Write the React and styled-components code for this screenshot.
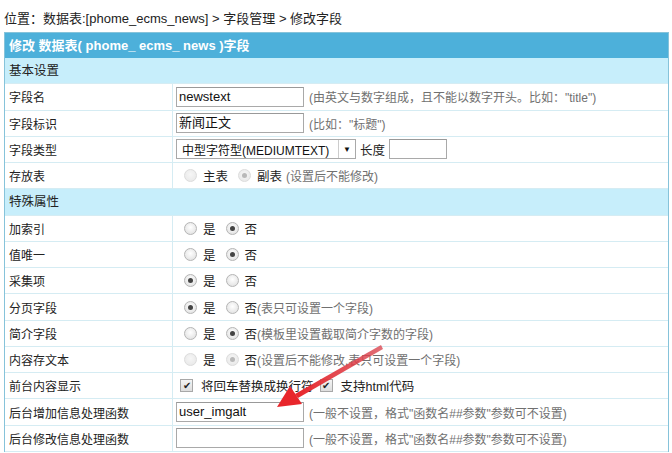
import React from "react";
import styled, { createGlobalStyle, css } from "styled-components";

const Global = createGlobalStyle`
  html, body { margin: 0; padding: 0; background: #fff; }
  body {
    font-family: "Liberation Sans", "Noto Sans CJK SC", sans-serif;
    font-size: 12px;
    color: #222;
  }
`;

const Page = styled.div`
  position: relative;
  width: 672px;
  height: 453px;
  padding: 0 3px 0 4px;
  box-sizing: border-box;
  overflow: hidden;
`;

const Crumb = styled.div`
  height: 32px;
  line-height: 38px;
  font-size: 13px;
  color: #222;
  white-space: nowrap;
`;

const Table = styled.div`
  border: 1px solid #86c3da;
  border-bottom: none;
  display: flex;
  flex-direction: column;
`;

const Title = styled.div`
  height: 25px;
  line-height: 25px;
  background: #4db0da;
  color: #fff;
  font-weight: bold;
  padding-left: 4px;
  font-size: 13px;
  white-space: nowrap;
`;

const Section = styled.div`
  height: 26.27px;
  line-height: 26px;
  box-sizing: border-box;
  background: #c7eefb;
  padding-left: 4px;
  font-size: 12.5px;
  border-bottom: 1px solid #d5ecf3;
`;

const Row = styled.div`
  height: 26.27px;
  box-sizing: border-box;
  display: grid;
  grid-template-columns: 168px 1fr;
  border-bottom: 1px solid #d5ecf3;
  background: #fff;
`;

const Label = styled.div`
  display: flex;
  align-items: center;
  padding-left: 4px;
  font-size: 12px;
  border-right: 1px solid #d5ecf3;
  white-space: nowrap;
`;

const Cell = styled.div`
  display: flex;
  align-items: center;
  padding-left: ${(p) => p.$pl ?? 3}px;
  white-space: nowrap;
  font-size: 12.5px;
`;

const TextInput = styled.div`
  box-sizing: border-box;
  width: ${(p) => p.$w}px;
  height: 20px;
  border: 1px solid #a9a9a9;
  border-top-color: #999;
  line-height: 18px;
  padding-left: 2px;
  font-size: 13px;
  color: #111;
  background: #fff;
`;

const Hint = styled.span`
  color: #707070;
  font-size: 12px;
  margin-left: ${(p) => p.$ml ?? 5}px;
`;

const Select = styled.div`
  box-sizing: border-box;
  width: 180px;
  height: 20px;
  border: 1px solid #a9a9a9;
  display: flex;
  align-items: center;
  padding-left: 5px;
  font-size: 12px;
  color: #111;
`;

const Arrow = styled.span`
  margin-left: auto;
  width: 16px;
  height: 18px;
  display: flex;
  align-items: center;
  justify-content: center;
  font-size: 8px;
  color: #111;
  border-left: 1px solid #ccc;
`;

const Radio = styled.span`
  display: inline-block;
  box-sizing: border-box;
  width: 13px;
  height: 13px;
  border-radius: 50%;
  border: 1px solid ${(p) => (p.$disabled ? "#dcdcdc" : "#b5b5b5")};
  background: ${(p) =>
    p.$disabled
      ? "radial-gradient(circle at 50% 40%, #f6f6f6, #e6e6e6)"
      : "radial-gradient(circle at 50% 40%, #ffffff, #dcdcdc)"};
  margin: 0 6px 0 ${(p) => p.$ml ?? 0}px;
  position: relative;
  ${(p) =>
    p.$on &&
    css`
      &::after {
        content: "";
        position: absolute;
        left: 3px;
        top: 3px;
        width: 5px;
        height: 5px;
        border-radius: 50%;
        background: ${p.$disabled ? "#b8b8b8" : "#444"};
      }
    `}
`;

const Check = styled.span`
  display: inline-flex;
  align-items: center;
  justify-content: center;
  box-sizing: border-box;
  width: 13px;
  height: 13px;
  border: 1px solid #a8a8a8;
  background: linear-gradient(#f4f4f4, #dedede);
  margin: 0 8px 0 ${(p) => p.$ml ?? 0}px;
  font-size: 10px;
  line-height: 1;
  color: #222;
`;

const Txt = styled.span`
  color: #222;
  margin: 0 ${(p) => p.$mx ?? 0}px;
`;

const Overlay = styled.svg`
  position: absolute;
  left: 0;
  top: 0;
  pointer-events: none;
`;

const RadioPair = ({ a, b, aOn, disabled, hint, hintGap = 0 }) => (
  <Cell $pl={11}>
    <Radio $on={aOn} $disabled={disabled} />
    <Txt>{a}</Txt>
    <Radio $on={!aOn} $disabled={disabled} $ml={10} />
    <Txt>{b}</Txt>
    {hint && <Hint $ml={hintGap}>{hint}</Hint>}
  </Cell>
);

export default function App() {
  return (
    <Page>
      <Global />
      <Crumb>位置：数据表:[phome_ecms_news] &gt; 字段管理 &gt; 修改字段</Crumb>
      <Table>
        <Title>修改 数据表( phome_ ecms_ news )字段</Title>
        <Section>基本设置</Section>
        <Row>
          <Label>字段名</Label>
          <Cell>
            <TextInput $w={128}>newstext</TextInput>
            <Hint>(由英文与数字组成，且不能以数字开头。比如："title")</Hint>
          </Cell>
        </Row>
        <Row>
          <Label>字段标识</Label>
          <Cell>
            <TextInput $w={128}>新闻正文</TextInput>
            <Hint>(比如："标题")</Hint>
          </Cell>
        </Row>
        <Row>
          <Label>字段类型</Label>
          <Cell>
            <Select>
              中型字符型(MEDIUMTEXT)
              <Arrow>▼</Arrow>
            </Select>
            <Txt $mx={4}>长度</Txt>
            <TextInput $w={58} />
          </Cell>
        </Row>
        <Row>
          <Label>存放表</Label>
          <RadioPair a="主表" b="副表" aOn={false} disabled hint="(设置后不能修改)" hintGap={4} />
        </Row>
        <Section>特殊属性</Section>
        <Row>
          <Label>加索引</Label>
          <RadioPair a="是" b="否" aOn={false} />
        </Row>
        <Row>
          <Label>值唯一</Label>
          <RadioPair a="是" b="否" aOn={false} />
        </Row>
        <Row>
          <Label>采集项</Label>
          <RadioPair a="是" b="否" aOn />
        </Row>
        <Row>
          <Label>分页字段</Label>
          <RadioPair a="是" b="否" aOn hint="(表只可设置一个字段)" />
        </Row>
        <Row>
          <Label>简介字段</Label>
          <RadioPair a="是" b="否" aOn={false} hint="(模板里设置截取简介字数的字段)" />
        </Row>
        <Row>
          <Label>内容存文本</Label>
          <RadioPair a="是" b="否" aOn={false} disabled hint="(设置后不能修改,表只可设置一个字段)" />
        </Row>
        <Row>
          <Label>前台内容显示</Label>
          <Cell $pl={7}>
            <Check>✔</Check>
            <Txt>将回车替换成换行符</Txt>
            <Check $ml={6}>✔</Check>
            <Txt>支持html代码</Txt>
          </Cell>
        </Row>
        <Row>
          <Label>后台增加信息处理函数</Label>
          <Cell>
            <TextInput $w={128}>user_imgalt</TextInput>
            <Hint>(一般不设置，格式"函数名##参数"参数可不设置)</Hint>
          </Cell>
        </Row>
        <Row>
          <Label>后台修改信息处理函数</Label>
          <Cell>
            <TextInput $w={128} />
            <Hint>(一般不设置，格式"函数名##参数"参数可不设置)</Hint>
          </Cell>
        </Row>
      </Table>
      <Overlay width="672" height="453" viewBox="0 0 672 453">
        <defs>
          <linearGradient id="ag" x1="0" y1="0" x2="1" y2="0">
            <stop offset="0" stopColor="#e8262b" />
            <stop offset="1" stopColor="#d94a55" stopOpacity="0.8" />
          </linearGradient>
        </defs>
        <polygon points="381,345 383,349 298,398 295,394" fill="url(#ag)" />
        <polygon points="277,407 302,404 290,386" fill="#e8262b" />
      </Overlay>
    </Page>
  );
}
